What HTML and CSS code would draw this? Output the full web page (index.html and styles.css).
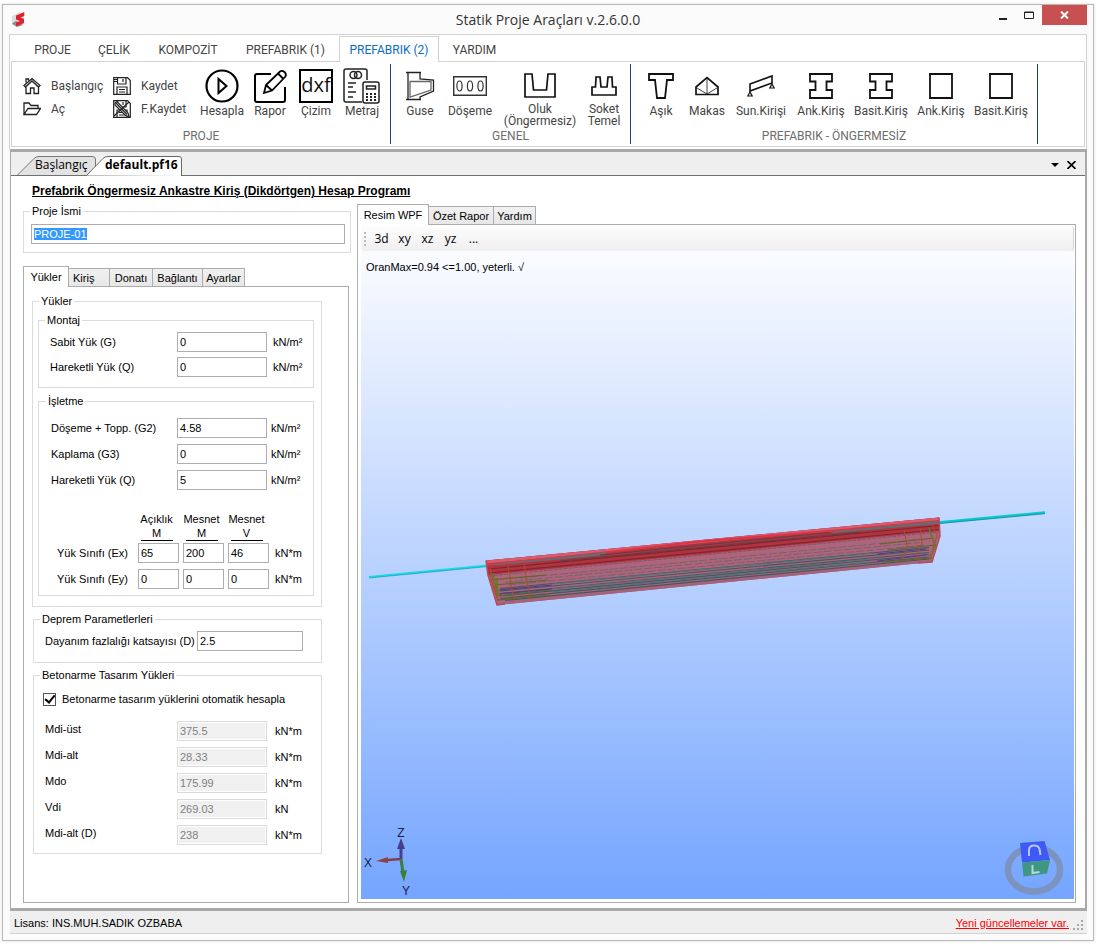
FILE: index.html
```html
<!DOCTYPE html>
<html lang="tr">
<head>
<meta charset="utf-8">
<title>Statik Proje Araçları v.2.6.0.0</title>
<link rel="stylesheet" href="styles.css">
</head>
<body>
<div class="window">
  <header class="titlebar">
    <svg class="app-logo" width="16" height="18" viewBox="0 0 16 18"><path d="M1 5L9 1.500L13 4V13L6 16L1 14Z" fill="#dcdcdc"/><path d="M1 12.500L6 16L12 14L5 10Z" fill="#8c8c8c"/><path d="M13.300 1L5 4.500V8.500L9 10L5 11.500V15.200L13 12V8L9.500 6.500L13.300 5Z" fill="#dc2430"/></svg>
    <h1 class="title">Statik Proje Araçları v.2.6.0.0</h1>
    <div class="window-buttons">
      <button class="win-btn" aria-label="Simge durumuna küçült"><svg width="8" height="10"><path d="M0 8H8V10H0Z" fill="#222"/></svg></button>
      <button class="win-btn" aria-label="Ekranı kapla"><svg width="10" height="8"><path d="M0.500 1H9.500V7.500H.5ZM0 1.500H10" fill="none" stroke="#222"/></svg></button>
      <button class="win-btn win-close" aria-label="Kapat"><svg width="9" height="8"><path d="M1 0.500L8 7.500M8 .5L1 7.500" stroke="#fff" stroke-width="2"/></svg></button>
    </div>
  </header>

  <section class="ribbon">
    <nav class="ribbon-tabs">
      <button class="ribbon-tab">PROJE</button>
      <button class="ribbon-tab">ÇELİK</button>
      <button class="ribbon-tab">KOMPOZİT</button>
      <button class="ribbon-tab">PREFABRIK (1)</button>
      <button class="ribbon-tab active">PREFABRIK (2)</button>
      <button class="ribbon-tab">YARDIM</button>
    </nav>
    <div class="ribbon-panel">
      <div class="group group-project">
        <div class="group-items">
          <div class="small-items">
            <button class="small-item"><svg width="18" height="18" viewBox="0 0 18 18" fill="none" stroke="#222" stroke-width="1.300"><path d="M1 8.500L9 1.500L17 8.500L15.500 10L9 4L2.500 10ZM3 5.500V2H5.500V3.500M3 10V16.500H7.500V11H11V16.500H15.500V10"/></svg>Başlangıç</button>
            <button class="small-item"><svg width="18" height="18" viewBox="0 0 18 18" fill="none" stroke="#222" stroke-width="1.300"><path d="M1 14.500V3H6L8 5.500H15V8.500M1 14.500L5 8.500H17.500L13.500 14.500Z"/></svg>Aç</button>
          </div>
          <div class="small-items">
            <button class="small-item"><svg width="18" height="18" viewBox="0 0 18 18" fill="none" stroke="#222" stroke-width="1.200"><path d="M.7 .7H14.500L17.300 3.500V17.300H.7ZM4.500 .7V7H13V.7M10 2V5M4 17V10H14V17M6 12.500H12M6 15H12M1 2.500H4M1 4.500H4"/></svg>Kaydet</button>
            <button class="small-item"><svg width="18" height="18" viewBox="0 0 18 18" fill="none" stroke="#222" stroke-width="1.200"><path d="M.7 .7H14.500L17.300 3.500V17.300H.7ZM4.500 .7V7H13V.7M10 2V5M4 17V10H14V17M6 12.500H12M6 15H12"/><path d="M2 3L4 1.500L15 13L16 16.500L12.500 15.500L2 5Z" fill="#fff"/><path d="M3 3L14 14.500M1 16L16 2"/></svg>F.Kaydet</button>
          </div>
          <button class="item w50"><span class="icon"><svg width="34" height="34" viewBox="0 0 34 34" fill="none" stroke="#000" stroke-width="2.200"><circle cx="17" cy="17" r="15.500"/><path d="M13.500 10V24L21.500 17Z" stroke-width="2"/></svg></span>Hesapla</button>
          <button class="item w46"><span class="icon"><svg width="34" height="34" viewBox="0 0 34 34" fill="none" stroke="#000" stroke-width="2"><path d="M18 5H4Q2 5 2 7V31Q2 33 4 33H30Q32 33 32 31V18"/><path d="M11 24L13 16L27 2.500Q29 1 31.500 3Q34 5.500 32 8L19 21.500ZM25 4.500L30.500 10M13 16L19 21.500" stroke-width="1.800"/></svg></span>Rapor</button>
          <button class="item w46"><span class="icon"><svg width="34" height="34" viewBox="0 0 34 34"><path d="M1 1H33V33H1Z" fill="none" stroke="#000" stroke-width="2"/><text class="dxf" x="17" y="23" text-anchor="middle">dxf</text></svg></span>Çizim</button>
          <button class="item w46"><span class="icon"><svg width="38" height="36" viewBox="0 0 38 36" fill="none" stroke="#222" stroke-width="1.500"><path d="M24 12V3Q24 1 22 1H3Q1 1 1 3V32Q1 34 3 34H19"/><circle cx="10.500" cy="7" r="3.500"/><circle cx="15" cy="7" r="3.500"/><path d="M5 15H13M5 19H10M5 24H13M5 29H10"/><rect x="20" y="14" width="16" height="21" rx="2"/><path d="M23.500 18H32.500V21H23.500Z"/><path d="M23 26H33M23 29H33M23 32H33" stroke-width="2" stroke-dasharray="2 2"/></svg></span>Metraj</button>
        </div>
        <div class="group-name">PROJE</div>
      </div>
      <div class="group group-general">
        <div class="group-items">
          <button class="item w48"><span class="icon"><svg width="30" height="30" viewBox="0 0 30 30" fill="none" stroke="#222" stroke-width="1.300"><path d="M1 1.500H16M1 28.500H16M3 1.500V28.500M15 1.500V8L28.500 9V20L15 26V28.500"/><path d="M5 10.500H26V19L5 26Z" stroke="#666"/></svg></span>Guse</button>
          <button class="item w52"><span class="icon"><svg width="34" height="20" viewBox="0 0 34 20" fill="none" stroke="#333"><path d="M.7 .7H33.300V19.300H.7Z" stroke-width="1.400"/><g stroke-width="1.200"><ellipse cx="6.500" cy="10" rx="2.600" ry="5"/><ellipse cx="17" cy="10" rx="2.600" ry="5"/><ellipse cx="27.500" cy="10" rx="2.600" ry="5"/></g></svg></span>Döşeme</button>
          <button class="item w88 two-line"><span class="icon"><svg width="32" height="26" viewBox="0 0 32 26" fill="none" stroke="#111" stroke-width="1.700"><path d="M1 1H8L9.500 17H22.500L24 1H31V24H1Z"/></svg></span>Oluk<br>(Öngermesiz)</button>
          <button class="item w40 two-line"><span class="icon"><svg width="26" height="22" viewBox="0 0 26 22" fill="none" stroke="#111" stroke-width="1.700"><path d="M1 20V12H4.500L5 2H9L10 12H16L17 2H21L21.500 12H25V20Z"/></svg></span>Soket<br>Temel</button>
        </div>
        <div class="group-name">GENEL</div>
      </div>
      <div class="group group-prefab">
        <div class="group-items">
          <button class="item w44"><span class="icon"><svg width="26" height="28" viewBox="0 0 26 28" fill="none" stroke="#111" stroke-width="1.800"><path d="M1 2H25V8H19L17 26H9L7 8H1Z"/></svg></span>Aşık</button>
          <button class="item w48"><span class="icon"><svg width="24" height="20" viewBox="0 0 24 20" fill="none" stroke="#111" stroke-width="1.700"><path d="M1 18.500V11L12 1.500L23 11V18.500Z"/><path d="M12 2V18M2 12L12 18L22 12" stroke-width=".8"/></svg></span>Makas</button>
          <button class="item w60"><span class="icon"><svg width="28" height="24" viewBox="0 0 28 24" fill="none" stroke="#111" stroke-width="1.600"><path d="M3 10L25 2V9L3 17Z"/><path d="M3 18L.8 22H5.200ZM25 10L22.800 14H27.200Z" stroke-width="1.200"/></svg></span>Sun.Kirişi</button>
          <button class="item w60"><span class="icon"><svg width="26" height="28" viewBox="0 0 26 28" fill="none" stroke="#111" stroke-width="1.800"><path d="M2 2H24V9.500H18.500V18H24V26H2V18H7.500V9.500H2Z"/></svg></span>Ank.Kiriş</button>
          <button class="item w60"><span class="icon"><svg width="26" height="28" viewBox="0 0 26 28" fill="none" stroke="#111" stroke-width="1.800"><path d="M2 2H24V9.500H18.500V18H24V26H2V18H7.500V9.500H2Z"/></svg></span>Basit.Kiriş</button>
          <button class="item w60"><span class="icon"><svg width="26" height="28" viewBox="0 0 26 28" fill="none" stroke="#111" stroke-width="1.800"><path d="M2 2H24V26H2Z"/></svg></span>Ank.Kiriş</button>
          <button class="item w60"><span class="icon"><svg width="26" height="28" viewBox="0 0 26 28" fill="none" stroke="#111" stroke-width="1.800"><path d="M2 2H24V26H2Z"/></svg></span>Basit.Kiriş</button>
        </div>
        <div class="group-name">PREFABRIK - ÖNGERMESİZ</div>
      </div>
    </div>
  </section>

  <main class="workspace">
    <nav class="doc-tabs">
      <button class="doc-tab"><svg class="tab-shape" width="79" height="19" viewBox="0 0 79 19"><path d="M.5 19L17 2.500Q19 .5 22 .5H75Q78.500 .5 78.500 3V19" fill="#e2e2e2" stroke="#777"/></svg><span>Başlangıç</span></button>
      <button class="doc-tab current"><svg class="tab-shape" width="96" height="20" viewBox="0 0 96 20"><path d="M.5 19.500L17 2.500Q19 .5 22 .5H93Q95.500 .5 95.500 3V20" fill="#fff" stroke="#666"/></svg><span>default.pf16</span></button>
      <span class="doc-tools">
        <button class="doc-tool" aria-label="Belgeler"><svg width="8" height="4"><path d="M0 0H8L4 4Z"/></svg></button>
        <button class="doc-tool" aria-label="Belgeyi kapat"><svg width="9" height="8"><path d="M.5 0L8.500 8M8.500 0L.5 8" stroke="#000" stroke-width="1.600"/></svg></button>
      </span>
    </nav>
    <div class="document">
      <h2 class="doc-title">Prefabrik Öngermesiz Ankastre Kiriş (Dikdörtgen) Hesap Programı</h2>
      <div class="columns">
        <form class="inputs">
          <fieldset class="box name-box">
            <legend>Proje İsmi</legend>
            <div class="name-field"><input id="name" class="field" value="PROJE-01" aria-label="Proje İsmi"></div>
          </fieldset>
          <div class="tabs left-tabs">
            <button type="button" class="tab on t46">Yükler</button><button type="button" class="tab t41">Kiriş</button><button type="button" class="tab t43">Donatı</button><button type="button" class="tab t50">Bağlantı</button><button type="button" class="tab t42">Ayarlar</button>
          </div>
          <div class="panel loads-panel">
            <fieldset class="box loads">
              <legend>Yükler</legend>
              <fieldset class="box inner montage">
                <legend>Montaj</legend>
                <div class="row"><label for="g">Sabit Yük (G)</label><input id="g" class="field" value="0"><span>kN/m²</span></div>
                <div class="row"><label for="q">Hareketli Yük (Q)</label><input id="q" class="field" value="0"><span>kN/m²</span></div>
              </fieldset>
              <fieldset class="box inner service">
                <legend>İşletme</legend>
                <div class="row"><label for="g2">Döşeme + Topp. (G2)</label><input id="g2" class="field" value="4.58"><span>kN/m²</span></div>
                <div class="row"><label for="g3">Kaplama (G3)</label><input id="g3" class="field" value="0"><span>kN/m²</span></div>
                <div class="row"><label for="q2">Hareketli Yük (Q)</label><input id="q2" class="field" value="5"><span>kN/m²</span></div>
                <table class="forces">
                  <thead><tr><td class="corner"></td><th>Açıklık<u>M</u></th><th>Mesnet<u>M</u></th><th>Mesnet<u>V</u></th><td></td></tr></thead>
                  <tbody>
                    <tr><th>Yük Sınıfı (Ex)</th><td><input class="field" value="65" aria-label="Ex Açıklık M"></td><td><input class="field" value="200" aria-label="Ex Mesnet M"></td><td><input class="field" value="46" aria-label="Ex Mesnet V"></td><td class="unit">kN*m</td></tr>
                    <tr><th>Yük Sınıfı (Ey)</th><td><input class="field" value="0" aria-label="Ey Açıklık M"></td><td><input class="field" value="0" aria-label="Ey Mesnet M"></td><td><input class="field" value="0" aria-label="Ey Mesnet V"></td><td class="unit">kN*m</td></tr>
                  </tbody>
                </table>
              </fieldset>
            </fieldset>
            <fieldset class="box quake">
              <legend>Deprem Parametlerleri</legend>
              <div class="quake-row"><label for="d">Dayanım fazlalığı katsayısı (D)</label><input id="d" class="field" value="2.5"></div>
            </fieldset>
            <fieldset class="box design">
              <legend>Betonarme Tasarım Yükleri</legend>
              <label class="check"><input type="checkbox" checked>Betonarme tasarım yüklerini otomatik hesapla</label>
              <div class="row"><label for="m1">Mdi-üst</label><input id="m1" class="field" value="375.5" disabled><span>kN*m</span></div>
              <div class="row"><label for="m2">Mdi-alt</label><input id="m2" class="field" value="28.33" disabled><span>kN*m</span></div>
              <div class="row"><label for="m3">Mdo</label><input id="m3" class="field" value="175.99" disabled><span>kN*m</span></div>
              <div class="row"><label for="m4">Vdi</label><input id="m4" class="field" value="269.03" disabled><span>kN</span></div>
              <div class="row"><label for="m5">Mdi-alt (D)</label><input id="m5" class="field" value="238" disabled><span>kN*m</span></div>
            </fieldset>
          </div>
        </form>

        <section class="results">
          <div class="tabs">
            <button class="tab on t72">Resim WPF</button><button class="tab t65">Özet Rapor</button><button class="tab t42">Yardım</button>
          </div>
          <div class="panel view-panel">
            <div class="toolbar">
              <span class="grip"></span>
              <button class="tool">3d</button><button class="tool">xy</button><button class="tool">xz</button><button class="tool">yz</button><button class="tool">...</button>
            </div>
            <div class="viewport">
              <svg class="scene" viewBox="361 251 713 648">
                <path d="M369 577L488 565.500" stroke="#10dcea" stroke-width="2.200"/>
                <path d="M369 578L488 566.500" stroke="#167f90" stroke-width=".5"/>
                <path d="M938 522.500L1045 512.500" stroke="#05c9cf" stroke-width="2.600"/>
                <path d="M938 523.700L1045 513.700" stroke="#087f86" stroke-width=".7"/>
                <path d="M486 560.500L939 517.500L940 536L932 562L497 605L487 573Z" fill="#ae647a"/>
                <path d="M486 560.500L939 517.500L940 531L488 575Z" fill="#b23340"/>
                <path d="M486 560.500L939 517.500V520.500L486 563.500Z" fill="#d95b6f"/>
                <path d="M487 565L600 553L700 541.500L830 531L939 521" fill="none" stroke="#dc3444" stroke-width="2"/>
                <path d="M487 565L606 552V555L500 565ZM826 532L938 521V524L835 533Z" fill="#686b70"/>
                <path d="M489 569L939 525.500M489 573L939 529.500" stroke="#802631" stroke-width="1.200"/>
                <path d="M600 555L830 532.500M560 561L860 532" stroke="#5e4148"/>
                <path d="M489 576L939 532" stroke="#815668" stroke-dasharray="4 1"/>
                <path d="M520 578L915 540M505 582L920 542.500M508 585L925 545" stroke="#77626f" stroke-dasharray="8 2"/>
                <path d="M500 588.500L929 547.500M500 591L929 550M500 593.500L929 552.500M500 596L929 554.500M500 598.500L929 557M505 600.500L929 559" stroke="#3e5963" stroke-width="1.200"/>
                <path d="M552 589L870 559M552 592L870 562M552 584L875 553" stroke="#527477" stroke-width="1.100"/>
                <path d="M497 604L932 561" stroke="#a4627b" stroke-width="2"/>
                <path d="M490 580L546 575M494 585L548 580M498 596L550 590M498 600L550 595M880 544L934 538M888 550L936 545M882 562L932 558" stroke="#586a24" stroke-width="1.200"/>
                <path d="M499 590L552 585M499 594L552 589M877 554L926 549M877 561L926 555" stroke="#553a82" stroke-width="1.200"/>
                <path d="M490 568L498 601L491 580V570M508 566L514 601M524 564L530 599M904 530L907 545L902 561M920 528L922 543L915 560M932 525L937 535L930 560" fill="none" stroke="#a5502d"/>
                <path d="M493 573L498 596L497 578M929 528L935 546L930 557" fill="none" stroke="#657827" stroke-width="1.500"/>
                <path d="M486 560.500L488 575L497 605L505 604M939 517.500L940 536L932 562L918 563" fill="none" stroke="#b34c5b" stroke-width="1.500"/>
              </svg>
              <p class="verdict">OranMax=0.94 &lt;=1.00, yeterli. √</p>
              <svg class="axes" width="54" height="76" viewBox="361 823 54 76">
                <path d="M401 859V845" stroke="#443f88" stroke-width="3"/><path d="M401 838L405 849H397Z" fill="#443f88"/>
                <path d="M401 859L388 860" stroke="#803f50" stroke-width="2.500"/><path d="M376 861L388 857V863Z" fill="#904048"/>
                <path d="M401 859L403 873" stroke="#3c7c45" stroke-width="3"/><path d="M404 882L400 871L407 870Z" fill="#3c8038"/>
                <text class="axis-name" x="401" y="837" text-anchor="middle">Z</text><text class="axis-name" x="368" y="867" text-anchor="middle">X</text><text class="axis-name" x="406" y="895" text-anchor="middle">Y</text>
              </svg>
              <svg class="cube" width="60" height="58" viewBox="1004 838 60 58">
                <ellipse cx="1034" cy="869.500" rx="26" ry="22" fill="none" stroke="#7c93c0" stroke-width="6.500"/>
                <path d="M1020 843L1044.500 841L1050 860L1022 862.500Z" fill="#3f58f8"/>
                <path d="M1022 862.500L1050 860L1047 873.500L1023.500 876.500Z" fill="#3f9682"/>
                <path d="M1029 856V850Q1029 845.500 1034 845.500Q1038.500 845.500 1039.500 849L1040.500 855" fill="none" stroke="#b9c7f4" stroke-width="2"/>
                <path d="M1032.500 865V873L1039.500 872" fill="none" stroke="#b8d8d8" stroke-width="2"/>
              </svg>
            </div>
          </div>
        </section>
      </div>
    </div>
  </main>

  <footer class="status">
    <span>Lisans: INS.MUH.SADIK OZBABA</span>
    <a class="update" href="#">Yeni güncellemeler var.</a>
    <svg class="resize" width="11" height="11" fill="#a8a8a8"><path d="M8 0H10V2H8ZM4 4H6V6H4ZM8 4H10V6H8ZM0 8H2V10H0ZM4 8H6V10H4ZM8 8H10V10H8Z"/></svg>
  </footer>
</div>
<script src="main.js"></script>
</body>
</html>
```

FILE: main.js
```js
document.getElementById("name").select();
```

FILE: styles.css
```css
* { box-sizing: border-box; }
body {
  margin: 0;
  padding: 4px 3px 5px 2px;
  min-height: 100vh;
  display: flex;
  background: #fff;
  color: #000;
  font: 11px/14px "Liberation Sans", Arial, sans-serif;
}
button { font: inherit; color: inherit; background: none; border: 0; padding: 0; margin: 0; white-space: nowrap; }
svg { display: block; flex: none; }

.window {
  flex: 1;
  min-width: 0;
  display: flex;
  flex-direction: column;
  padding: 0 6px 6px;
  background: #fbfbfb;
  border: 1px solid #b9b9b9;
  box-shadow: 0 0 3px #ddd;
}

/* Title bar */
.titlebar { display: grid; grid-template-columns: 1fr auto 1fr; height: 29px; }
.app-logo { margin: 6px 0 0 2px; }
.title { margin: 0; font: 14px/29px "Open Sans", "Noto Sans", sans-serif; color: #333; }
.window-buttons { display: flex; justify-content: flex-end; height: 20px; }
.win-btn { width: 26px; display: flex; align-items: center; justify-content: center; }
.win-close { width: 45px; background: #c75050; }

/* Ribbon */
.ribbon { border: 1px solid #d2d2d2; border-bottom: 0; background: #fff; padding: 0 1px 2px; font: 12px/12px Roboto, sans-serif; color: #444; }
.ribbon-tabs { display: grid; grid-template-columns: 63px 60px 88px 107px 100px 71px; padding: 1px 0 0 10px; }
.ribbon-tab { height: 25px; padding-top: 2px; border: 1px solid transparent; border-bottom: 0; }
.ribbon-tab.active { color: #0b6cc4; border-color: #d2d2d2; background: #fff; margin-bottom: -1px; height: 26px; padding-top: 1px; z-index: 1; }
.ribbon-panel { display: flex; border: 1px solid #d2d2d2; padding: 2px 0; height: 86px; }
.group { display: flex; flex-direction: column; justify-content: space-between; border-right: 1px solid #1d4079; padding: 5px 0 1px; }
.group-project { width: 379px; }
.group-general { width: 240px; }
.group-prefab { width: 407px; }
.group-items { display: flex; }
.group-project .group-items { padding-left: 11px; }
.group-general .group-items { padding-left: 5px; }
.group-prefab .group-items { padding-left: 8px; }
.small-items { width: 90px; display: flex; flex-direction: column; gap: 5px; padding-top: 8px; }
.small-items + .small-items { width: 84px; }
.small-item { display: flex; align-items: center; gap: 10px; height: 18px; }
.item { display: flex; flex-direction: column; align-items: center; text-align: center; }
.icon { height: 34px; display: flex; align-items: center; margin-bottom: 2px; }
.two-line .icon { margin-bottom: 0; }
.w40 { width: 40px; } .w44 { width: 44px; } .w46 { width: 46px; } .w48 { width: 48px; } .w50 { width: 50px; } .w52 { width: 52px; } .w60 { width: 60px; } .w88 { width: 88px; }
.group-name { text-align: center; line-height: 14px; color: #6d6d6d; }
.dxf { font: 20px "Open Sans", sans-serif; fill: #111; }

/* Document area */
.workspace { flex: 1; display: flex; flex-direction: column; margin-left: 1px; border: 1px solid #a9a9a9; border-width: 3px 2px 3px 1px; background: #fff; }
.doc-tabs { display: flex; align-items: flex-end; height: 24px; padding-left: 6px; background: #efefef; border-bottom: 1px solid #707070; font: 12px/17px "Open Sans", "Noto Sans", sans-serif; }
.doc-tab { position: relative; display: flex; width: 79px; height: 19px; padding-left: 18px; }
.doc-tab.current { width: 96px; height: 20px; margin: 0 0 -1px -10px; padding-left: 19px; font-weight: 700; }
.doc-tab span { position: relative; }
.tab-shape { position: absolute; left: 0; top: 0; }
.doc-tools { display: flex; gap: 8px; margin-left: auto; padding: 0 9px 6px 0; }
.doc-tool { display: flex; align-items: center; }
.document { flex: 1; display: flex; flex-direction: column; padding: 7px 9px 5px 12px; }
.doc-title { margin: 0 0 0 9px; font-size: 12px; line-height: 16px; text-decoration: underline; }
.columns { flex: 1; display: grid; grid-template-columns: 328px 1fr; gap: 6px; }
.inputs { display: flex; flex-direction: column; padding-top: 5px; }

.box { margin: 0; padding: 0; border: 1px solid #dcdcdc; min-width: 0; }
.box legend { margin-left: 6px; padding: 0 2px; line-height: 14px; }
.name-box { height: 49px; }
.name-field { padding: 6px 5px 0 7px; }
.field { width: 100%; height: 20px; border: 1px solid #abadb3; padding: 0 2px; font: 11px/14px "Liberation Sans", Arial, sans-serif; color: #000; background: #fff; outline: 0; }
.field:disabled { color: #808080; background: #f0f0f0; border-color: #d9d9d9; box-shadow: inset 0 0 0 1px #fff; }
.field::selection { background: #3399ff; color: #fff; }

.tabs { display: flex; align-items: flex-end; position: relative; height: 20px; }
.left-tabs { margin-top: 13px; }
.tab { height: 18px; border: 1px solid #acacac; border-left: 0; border-bottom: 0; background: linear-gradient(#f1f1f1, #e7e7e7); }
.tab.on { height: 21px; margin-bottom: -1px; border-left: 1px solid #acacac; background: #fff; }
.t41 { width: 41px; } .t42 { width: 42px; } .t43 { width: 43px; } .t46 { width: 46px; } .t50 { width: 50px; } .t65 { width: 65px; } .t72 { width: 72px; }
.t41 { text-align: left; padding-left: 4px; }
.panel { flex: 1; border: 1px solid #acacac; background: #fff; }
.loads-panel { width: 326px; padding: 7px 26px 20px 8px; }

.loads { padding: 5px 7px 10px 5px; }
.box.loads > legend { margin-left: 1px; }
.box.inner > legend, .box.design > legend { margin-left: -5px; }
.inner + .inner { margin-top: 6px; }
.montage { padding: 5px 0 10px 11px; }
.service { padding: 10px 0 0 12px; }
.row { display: grid; grid-template-columns: 127px 90px 1fr; align-items: center; }
.row + .row { margin-top: 5px; }
.row span { padding-left: 6px; }
.service .row { grid-template-columns: 126px 90px 1fr; }
.service .row span { padding-left: 4px; }
.service .row + .row { margin-top: 6px; }
.forces { table-layout: fixed; width: 254px; border-spacing: 0; margin: 22px 0 0 6px; }
.forces th, .forces td { padding: 0; font-weight: 400; text-align: left; }
.forces .corner { width: 81px; }
.forces thead th { width: 45px; text-align: center; padding: 0 8px 2px 0; }
.forces thead u { display: block; width: 32px; margin: 0 auto; text-decoration: none; border-bottom: 1px solid #000; }
.forces tbody td { padding: 0 4px 6px 0; }
.forces tbody th { padding-bottom: 6px; }
.forces tbody .unit { padding: 0 0 6px 2px; }

.quake, .design { margin: 5px 0 0 1px; }
.quake { height: 51px; }
.quake-row { display: grid; grid-template-columns: 152px 106px; align-items: center; padding: 5px 0 0 11px; white-space: nowrap; }
.design { padding: 10px 0 8px 11px; }
.design .row { grid-template-columns: 132px 90px 1fr; }
.design .row span { padding-left: 8px; }
.design .row + .row { margin-top: 6px; }
.design .row label { padding-bottom: 5px; }
.check { display: flex; align-items: center; gap: 6px; margin: 0 0 15px -2px; }
.check input { appearance: none; width: 13px; height: 13px; margin: 0; border: 1px solid #555; display: grid; place-items: center; }
.check input:checked::before { content: ""; width: 8px; height: 4px; border: solid #000; border-width: 0 0 2px 2px; transform: rotate(-50deg); margin-bottom: 2px; }

/* Result view */
.results { display: flex; flex-direction: column; padding-top: 5px; min-width: 0; }
.view-panel { display: flex; flex-direction: column; padding: 1px 1px 3px 3px; }
.toolbar { display: flex; align-items: center; height: 25px; padding-left: 3px; border-radius: 3px; background: linear-gradient(#fdfdfd, #efefef); border-right: 1px solid #d5d5d5; font: 12px/16px "Open Sans", "Noto Sans", sans-serif; }
.grip { width: 2px; height: 14px; margin-right: 4px; background: repeating-linear-gradient(#bbb 0 2px, transparent 2px 4px); }
.tool { width: 23px; }
.viewport { position: relative; flex: 1; background: linear-gradient(#fafcff, #75a5ff); }
.scene { position: absolute; inset: 0; width: 100%; height: 100%; }
.verdict { position: relative; margin: 0; padding: 9px 0 0 5px; }
.axes { position: absolute; left: 0; bottom: 0; }
.cube { position: absolute; right: 10px; bottom: 3px; }
.axis-name { font: 12px "Liberation Sans", sans-serif; fill: #16203e; }

/* Status bar */
.status { display: flex; align-items: center; height: 23px; margin-left: 1px; padding: 1px 3px 0 4px; background: #efefef; border-bottom: 1px solid #d2d2d2; }
.update { margin-left: auto; color: #f00; }
.resize { margin: 6px 0 0 4px; }
```
